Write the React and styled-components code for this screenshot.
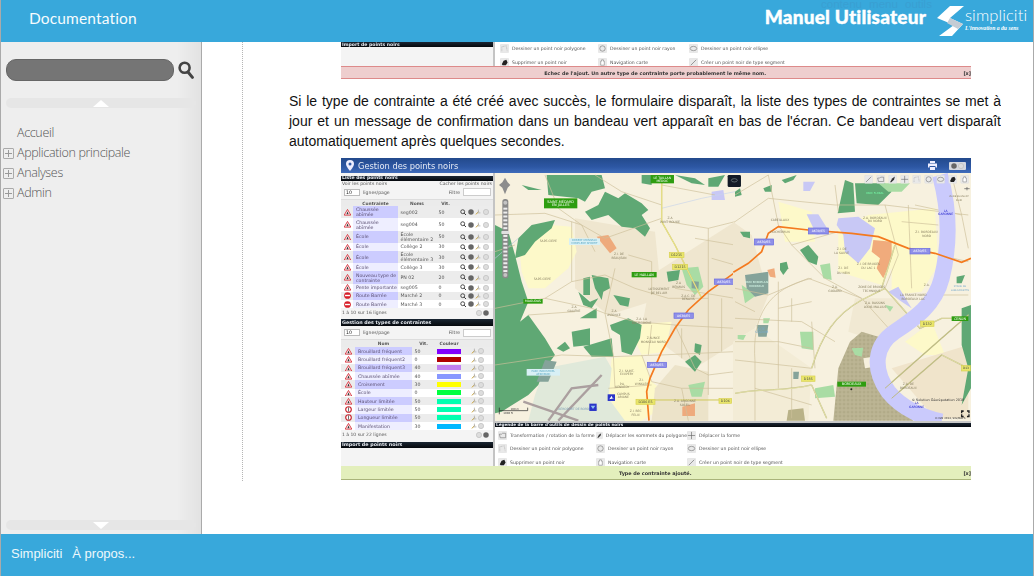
import React from "react";
import styled, { createGlobalStyle } from "styled-components";

const Global = createGlobalStyle`
  html, body { margin: 0; padding: 0; height: 100%; overflow: hidden; background: #fff; }
  #root { height: 100%; }
`;

const Page = styled.div`
  height: 576px; box-sizing: border-box; display: grid; grid-template-rows: 42px 1fr 42px;
  border-left: 1px solid #aaa; border-right: 1px solid #aaa; font-family: "Liberation Sans", Arial, sans-serif;
`;
const Header = styled.header`
  background: #38a8db; display: flex; align-items: center; justify-content: space-between; position: relative; overflow: hidden;
`;
const DocTitle = styled.div`
  margin-left: 28px; margin-top: -7px; color: #f6fcfe; font: 400 15.5px Lato, sans-serif; letter-spacing: 0.15px;
`;
const Ghost = styled.div`
  position: absolute; top: -1px; left: 820px; color: #3a9fd2; font: 400 11.5px/11px "Liberation Sans", sans-serif; word-spacing: 4px; white-space: nowrap;
`;
const Brand = styled.div` display: flex; align-items: center; margin-right: 7px; `;
const Manual = styled.div`
  color: #fff; font: 900 19px/20px Lato, sans-serif; letter-spacing: 0.2px; margin-right: 11px; margin-top: -8px; white-space: nowrap; -webkit-text-stroke: 0.4px #fff;
`;
const LogoText = styled.div` display: flex; flex-direction: column; margin-left: 0; width: 61px; margin-top: -3px; `;
const LogoName = styled.div` color: #fff; font: 300 16.5px/17px Lato, sans-serif; letter-spacing: 0.1px; `;
const LogoTag = styled.div` color: #fff; font: italic 700 5.7px/8px "Liberation Serif", serif; white-space: nowrap; `;

const Main = styled.main` display: grid; grid-template-columns: 201px 1fr; min-height: 0; overflow: hidden; `;
const Sidebar = styled.aside`
  border-right: 1px solid #aaa; display: flex; flex-direction: column; padding: 17px 5px 4px;
  background: linear-gradient(90deg, #eee 0, #eee 88%, #e2e2e2 100%);
`;
const SearchRow = styled.div` display: flex; align-items: center; gap: 4px; `;
const SearchField = styled.div`
  width: 168px; height: 22px; box-sizing: border-box; border-radius: 10px; background: #757575; border: 1px solid #666;
`;
const Band = styled.div`
  width: 190px; height: 10px; border-radius: 5px; background: #e6e6e6; margin-top: ${p => p.$top}; display: flex; justify-content: center;
`;
const Tri = styled.div`
  width: 0; height: 0; margin-top: 2px; border-left: 8px solid transparent; border-right: 8px solid transparent;
  ${p => p.$down ? "border-top: 7px solid #fff;" : "border-bottom: 7px solid #fff;"}
`;
const Menu = styled.nav` margin: 14px 0 0 -3px; display: flex; flex-direction: column; `;
const MenuItem = styled.div`
  height: 20px; display: flex; align-items: center; font: 300 12.5px "Open Sans", sans-serif; color: #555; white-space: nowrap; letter-spacing: -0.34px;
`;
const PlusBox = styled.span`
  width: 11px; height: 11px; box-sizing: border-box; border: 1px solid #aaa; border-radius: 1px; margin-right: 3px; margin-top: 2px; position: relative; flex: none;
  ${p => p.$empty ? "visibility: hidden;" : ""}
  &::before { content: ""; position: absolute; left: 1px; right: 1px; top: 4px; height: 1px; background: #999; }
  &::after { content: ""; position: absolute; top: 1px; bottom: 1px; left: 4px; width: 1px; background: #999; }
`;

const Content = styled.div` min-width: 0; overflow: hidden; `;
const Article = styled.article`
  margin-left: 40px; border-left: 1px dotted #b5b5b5; padding-left: 46px; width: 712px; height: 439px; overflow: hidden;
`;
const Para = styled.p`
  margin: 11px 0 7px; font: 14px/20px "Liberation Sans", Arial, sans-serif; color: #111; text-align: justify;
`;
const Shot = styled.div`
  margin-left: 52px; width: 630px; height: ${p => p.$h}px; overflow: hidden; filter: blur(0.3px);
  font-family: "DejaVu Sans", sans-serif; font-size: 4.7px; color: #555; background: #fff; display: flex; flex-direction: column;
`;
const ShotRow = styled.div` display: flex; height: ${p => p.$h}px; flex: none; `;
const LeftCol = styled.div`
  flex: none; background: #f4f4f4; border-right: 2px solid #c4c4c4; box-sizing: border-box; width: 154px;
  display: flex; flex-direction: column; padding-top: ${p => p.$top || 0}px;
`;
const Dark = styled.div`
  height: ${p => p.$h}px; flex: none; margin-top: ${p => p.$top || 0}px; background: linear-gradient(#1a2633, #05080c); color: #e4e8ee; font-size: ${p => p.$fs || 4.7}px;
  font-weight: 700; line-height: ${p => p.$h}px; padding-left: 1px; overflow: hidden; white-space: nowrap;
`;
const RightCol = styled.div` flex: 1; min-width: 0; display: flex; flex-direction: column; background: ${p => p.$bg || "#fff"}; `;
const Legend = styled.div`
  flex: 1; background: #fff; display: grid; grid-template-columns: 98px 91px 1fr; padding: ${p => p.$pad}; align-content: start; row-gap: ${p => p.$gap}px;
  font-size: 4.6px; color: #555;
`;
const LegendItem = styled.div` display: flex; align-items: center; gap: 3px; height: 10px; white-space: nowrap; `;
const Alert = styled.div`
  height: ${p => p.$h}px; flex: none; box-sizing: border-box; background: ${p => p.$bg}; border-top: 1px solid ${p => p.$line}; border-bottom: 1px solid ${p => p.$lineB || p.$line};
  display: grid; grid-template-columns: 1fr auto; align-items: center; font-size: 4.9px; font-weight: 700; color: #333;
`;
const AlertText = styled.span` text-align: center; padding-left: 6px; `;
const TitleBar = styled.div`
  height: 15px; flex: none; background: linear-gradient(#234a8c, #2d57a4 60%, #3f6cbb); display: flex; align-items: center; color: #e6ebf5;
  font-size: 8.3px; padding: 0 5px 0 5px; gap: 4px;
`;
const TitleSpacer = styled.div` flex: 1; `;
const SmallBtn = styled.div` width: 17px; height: 8px; background: #d5d8df; border-radius: 1px; margin-left: 7px; display: flex; align-items: center; justify-content: space-around; padding: 0 1px; box-sizing: border-box; `;
const Toggle = styled.div` height: 6.3px; flex: none; display: flex; justify-content: space-between; padding: 0 1px; line-height: 6.3px; font-size: 4.6px; white-space: nowrap; margin-top: 0.3px; `;
const LengthRow = styled.div` height: ${p => p.$h}px; margin-top: ${p => p.$top || 0}px; flex: none; display: flex; align-items: center; gap: 3px; padding: 0 2px 0 3px; font-size: 4.6px; `;
const SelectBox = styled.div` width: 16px; height: 7px; box-sizing: border-box; background: #fff; border: 1px solid #bbb; font-size: 4.7px; line-height: 5px; padding-left: 1px; color: #222; position: relative; `;
const FilterLabel = styled.span` margin-left: auto; `;
const FilterInput = styled.div` width: 28px; height: 8px; box-sizing: border-box; background: #fff; border: 1px solid #ccc; `;
const THead = styled.div`
  height: ${p => p.$h}px; margin-top: 2px; flex: none; display: grid; grid-template-columns: ${p => p.$cols}; background: #ebebeb; border-top: 1px solid #ddd; box-sizing: border-box;
  font-weight: 700; font-size: 4.4px; color: #555; align-items: center; text-align: center;
`;
const TRow = styled.div`
  height: ${p => p.$h}px; flex: none; display: grid; grid-template-columns: ${p => p.$cols}; background: ${p => p.$odd ? "#ececec" : "#fff"}; align-items: stretch;
`;
const Cell = styled.div` display: flex; align-items: center; line-height: 5px; overflow: hidden; padding-left: 2.5px; white-space: pre-line; `;
const NameCell = styled(Cell)` background: ${p => p.$odd ? "#ccccff" : "#eeeeff"}; color: #5a4f72; padding-left: 3px; `;
const IconCell = styled.div` display: flex; align-items: center; justify-content: center; `;
const ActionCell = styled.div` display: flex; align-items: center; justify-content: ${p => p.$end ? "flex-end" : "center"}; gap: 1.5px; padding-right: ${p => p.$end ? 9 : 0}px; `;
const Swatch = styled.div` display: flex; align-items: center; justify-content: center; &::before { content: ""; width: 24px; height: 5px; background: ${p => p.$c}; } `;
const TFoot = styled.div` height: 9px; flex: none; display: flex; align-items: center; justify-content: space-between; padding: 0 4px 0 1px; font-size: 4.5px; `;
const Pager = styled.div` display: flex; gap: 1px; `;
const MapBox = styled.div` height: ${p => p.$h}px; flex: none; background: #f6f0dd; `;
const MapSvg = styled.svg` display: block; `;

const Magnifier = () => (
  <svg width="16" height="18" viewBox="0 0 16 18"><circle cx="6.6" cy="6.8" r="5" fill="none" stroke="#444" strokeWidth="2.6" /><path d="M10 11l4.4 5.4" stroke="#444" strokeWidth="3" strokeLinecap="round" /></svg>
);
const Warn = ({ kind }) => {
  if (kind === "stop") return <svg width="7" height="7" viewBox="0 0 10 10"><circle cx="5" cy="5" r="4.8" fill="#d8202a" /><rect x="1.5" y="4" width="7" height="2" fill="#fff" /></svg>;
  if (kind === "round") return <svg width="7" height="7" viewBox="0 0 10 10"><circle cx="5" cy="5" r="4" fill="#fff" stroke="#c8202a" strokeWidth="1.6" /><path d="M5 2v6" stroke="#333" strokeWidth="1" /></svg>;
  return <svg width="7" height="6.5" viewBox="0 0 10 9"><path d="M5 .5L9.7 8.6H.3z" fill="#fff" stroke="#d8303a" strokeWidth="1.3" /><path d="M3.4 7.4L5 3l1.600 4.400z" fill="#333" /></svg>;
};
const Act = ({ t }) => {
  if (t === "m") return <svg width="6.500" height="6.500" viewBox="0 0 6 6"><circle cx="2.500" cy="2.500" r="1.800" fill="none" stroke="#333" strokeWidth=".8" /><path d="M3.800 3.800L5.600 5.600" stroke="#333" strokeWidth=".9" /></svg>;
  if (t === "d") return <svg width="6" height="6" viewBox="0 0 5 5"><circle cx="2.500" cy="2.500" r="2.300" fill="#666" /></svg>;
  if (t === "w") return <svg width="6" height="6" viewBox="0 0 6 6"><path d="M1 5.400L4 2" stroke="#c9a12f" strokeWidth="1" /><path d="M3.400 .6v3M2.400 3.900h3" stroke="#b5b5b5" strokeWidth=".9" /></svg>;
  return <svg width="6" height="6" viewBox="0 0 5 5"><circle cx="2.500" cy="2.500" r="2.200" fill="#ddd" stroke="#bbb" strokeWidth=".5" /></svg>;
};
const Tool = ({ t, s = 9 }) => {
  const glyph = {
    seg: <path d="M2 8L8 2" stroke="#777" strokeWidth=".8" />,
    trans: <path d="M1.500 3.500h2.500l1-1h3.500v5h-6z" fill="none" stroke="#777" strokeWidth=".7" />,
    vertex: <path d="M2 8.400L4.400 4 7.600 1.600 6.600 5.400 3.400 8.400z" fill="#333" />,
    move: <path d="M5 1v8M1 5h8" stroke="#666" strokeWidth=".7" />,
    poly: <path d="M2 8V3l5-1 1 6" fill="none" stroke="#aaa" strokeWidth=".7" strokeDasharray="1 .6" />,
    radius: <circle cx="5" cy="5" r="3" fill="none" stroke="#777" strokeWidth=".7" />,
    ellipse: <ellipse cx="5" cy="5" rx="3.600" ry="2.400" fill="none" stroke="#777" strokeWidth=".7" />,
    del: <path d="M2 7l2-4 3-1 1.500 3-2 3H3z" fill="#222" />,
    hand: <path d="M3 8V3.500h1V2h2v1.500h1V8z" fill="#fff" stroke="#777" strokeWidth=".6" />,
  }[t];
  return <svg width={s} height={s} viewBox="0 0 10 10"><rect x=".3" y=".3" width="9.400" height="9.400" rx="1" fill="#e9e9e9" stroke="#d8d8d8" strokeWidth=".4" />{glyph}</svg>;
};

const C1 = "12px 45px 38px 19px 1fr";
const C2 = "14px 57px 23px 28px 1fr";
const rows1 = [
  ["w", "Chaussée\nabîmée", "seg002", "50", 12.2], ["w", "Chaussée\nabîmée", "seg004", "50", 12.2],
  ["w", "École", "École\nélémentaire 2", "50", 12.2], ["w", "École", "Collège 2", "30", 8.2],
  ["w", "École", "École\nélémentaire 3", "30", 12.2], ["w", "École", "Collège 3", "30", 8.2],
  ["w", "Nouveau type de\ncontrainte", "PN 02", "20", 12.2], ["w", "Pente importante", "seg005", "0", 8.2],
  ["stop", "Route Barrée", "Marché 2", "0", 8.2], ["stop", "Route Barrée", "Marché 3", "0", 8.2],
];
const rows2 = [
  ["w", "Brouillard fréquent", "50", "#8000ff"], ["w", "Brouillard fréquent2", "0", "#b00000"], ["w", "Brouillard fréquent3", "40", "#c080f0"],
  ["w", "Chaussée abîmée", "40", "#8898ff"], ["w", "Croisement", "30", "#ffff00"], ["w", "École", "0", "#00ff40"],
  ["w", "Hauteur limitée", "50", "#00ffb0"], ["round", "Largeur limitée", "50", "#00ffb0"], ["round", "Longueur limitée", "50", "#00ffb0"], ["w", "Manifestation", "30", "#00b8ff"],
];
const legend = [
  ["trans", "Transformation / rotation de la forme"], ["vertex", "Déplacer les sommets du polygone"], ["move", "Déplacer la forme"],
  ["poly", "Dessiner un point noir polygone"], ["radius", "Dessiner un point noir rayon"], ["ellipse", "Dessiner un point noir ellipse"],
  ["del", "Supprimer un point noir"], ["hand", "Navigation carte"], ["seg", "Créer un point noir de type segment"],
];

const P = ({ c, d }) => <path d={d} fill={c} />;
const poly = (pts) => "M" + pts.join(" L") + "z";
const Sign = ({ x, y, w, h, bg, fg = "#fff", t, b, fs = 12, stroke }) => (
  <g>
    <rect x={x} y={y} width={w} height={h} fill={bg} stroke={stroke || "none"} strokeWidth="2" />
    <text x={x + w / 2} y={b ? y + h / 2 - 1 : y + h / 2 + fs * 0.35} fontSize={fs} fill={fg} textAnchor="middle" fontFamily="DejaVu Sans">{t}</text>
    {b && <text x={x + w / 2} y={y + h / 2 + fs * 0.9} fontSize={fs} fill={fg} textAnchor="middle" fontFamily="DejaVu Sans">{b}</text>}
  </g>
);
const Label = ({ x, y, t, c = "#8a8264", fs = 11 }) => <text x={x} y={y} fontSize={fs} fill={c} textAnchor="middle" fontFamily="DejaVu Sans">{t}</text>;

const FOREST = "#5fa874";
const BEIGE = "#efe6cf";
const YEL = "#fdf9c9";
const LGREEN = "#a9dca4";
const ROAD = "#cdbf9a";

const MapView = () => (
  <MapSvg width="476" height="248" viewBox="495 173 476 248">
    <defs>
      <pattern id="city" width="4" height="4" patternUnits="userSpaceOnUse">
        <rect width="4" height="4" fill="#bdb695" />
        <rect width="2" height="2" fill="#a9a380" />
      </pattern>
    </defs>
    <rect x="495" y="173" width="476" height="248" fill="#f7f1df" />
    <g transform="translate(495 155) scale(.3333)">
      <P c={BEIGE} d={poly(["240,190", "480,230", "500,430", "340,480", "240,400"])} />
      <P c={BEIGE} d={poly(["470,360", "720,200", "725,560", "600,640", "440,520"])} />
      <P c={YEL} d={poly(["75,300", "110,240", "170,210", "230,215", "245,290", "220,340", "150,400", "100,400", "80,350"])} />
      <P c={YEL} d={poly(["400,510", "530,500", "510,590", "440,600"])} />
      <P c={YEL} d={poly(["350,610", "440,600", "470,680", "540,735", "440,797", "380,797", "340,720"])} />
      <P c="#e0e9da" d={poly(["150,640", "330,605", "350,640", "340,730", "390,797", "100,797", "120,720"])} />
      <P c="#ece3c9" d={poly(["540,630", "640,650", "640,797", "470,797", "480,700"])} />
      <P c={FOREST} d={poly(["0,210", "40,230", "60,300", "80,380", "100,440", "75,500", "100,480", "150,550", "180,600", "150,640", "130,690", "100,720", "20,770", "0,775"])} />
      <P c={FOREST} d={poly(["155,60", "320,60", "330,100", "290,110", "270,140", "250,130", "160,120"])} />
      <P c={FOREST} d={poly(["270,170", "310,150", "330,110", "370,130", "390,115", "440,145", "460,165", "440,180", "465,220", "450,245", "420,220", "380,215", "340,180", "290,195"])} />
      <P c={FOREST} d={poly(["60,310", "70,250", "110,210", "180,195", "170,220", "120,260", "90,300"])} />
      <P c={FOREST} d={poly(["265,370", "285,365", "285,420", "265,420"])} />
      <P c={FOREST} d={poly(["290,360", "340,370", "345,400", "325,410", "320,435", "300,400"])} />
      <P c={FOREST} d={poly(["250,410", "285,440", "310,430", "290,460", "265,450"])} />
      <P c={FOREST} d={poly(["355,420", "405,430", "400,455", "375,450"])} />
      <P c={FOREST} d={poly(["255,490", "305,460", "305,490"])} />
      <P c={FOREST} d={poly(["345,510", "400,490", "440,510", "435,550", "410,600", "380,590", "375,540", "350,525"])} />
      <P c={FOREST} d={poly(["230,530", "285,520", "285,570", "235,575"])} />
      <P c={FOREST} d={poly(["185,580", "210,560", "225,580", "205,590"])} />
      <P c={FOREST} d={poly(["265,575", "350,550", "355,605", "290,605"])} />
      <P c={FOREST} d={poly(["515,350", "555,345", "550,375", "520,380"])} />
      <P c={FOREST} d={poly(["570,620", "600,600", "620,620", "600,650"])} />
      <P c={FOREST} d={poly(["600,565", "620,570", "615,600", "598,590"])} />
      <P c={FOREST} d={poly(["440,60", "470,60", "470,90", "440,85"])} />
      <P c={FOREST} d={poly(["540,60", "600,70", "630,90", "590,85"])} />
      <P c={FOREST} d={poly(["640,70", "690,60", "670,95", "640,95"])} />
      <P c={FOREST} d={poly(["80,90", "140,105", "100,105"])} />
      <P c={LGREEN} d={poly(["560,340", "610,335", "625,395", "600,420", "575,390"])} />
      <P c={LGREEN} d={poly(["580,690", "630,680", "620,725", "590,725"])} />
      <P c="#85a39a" d={poly(["590,378", "612,380", "610,402", "590,400"])} />
      <P c="#85a39a" d={poly(["150,615", "185,620", "160,680", "125,680"])} />
      <P c="#c8c8f5" d={poly(["650,110", "685,105", "690,135", "650,135"])} />
      <P c="#eeaa7c" d={poly(["305,245", "340,240", "365,280", "345,295"])} />
      <P c="#eeaa7c" d={poly(["562,755", "600,745", "600,783", "562,783"])} />
      {["M0 180 L150 175 L260 210 L330 250 L500 190", "M150 60 L190 160 L260 210 L300 290", "M0 460 L150 430 L230 380 L330 360 L420 400 L520 430 L640 430", "M330 475 L420 500 L540 510 L720 520", "M150 430 L290 460 L330 475 L355 600 L360 700", "M0 630 L200 600 L350 605 L500 600 L720 590", "M640 220 L640 720", "M0 290 L60 270", "M540 510 L600 640 L640 660", "M360 340 L330 475", "M600 250 L720 270", "M520 200 L640 220 L720 200", "M500 90 L660 120", "M440 600 L470 680 L560 700 L720 700", "M340 700 L470 690", "M540 400 L720 430", "M400 300 L470 320 L470 420", "M230 380 L230 200", "M470 510 L460 600", "M650 310 L720 330", "M560 520 L560 610", "M680 430 L680 590", "M640 660 L720 650", "M560 700 L580 797", "M100 480 L240 470", "M300 60 L380 110 L500 150"].map((d, i) => <path key={i} d={d} fill="none" stroke={ROAD} strokeWidth="2" />)}
      <path d="M0 310L70 250" stroke="#b9c6dc" strokeWidth="2" fill="none" />
      <path d="M500 160L620 130 720 110" stroke="#c9d4ea" strokeWidth="2" fill="none" />
      <path d="M500 60V200L540 270 590 370 620 430" fill="none" stroke="#cfc85a" strokeWidth="4" />
      <path d="M500 60V200L540 270 590 370 620 430" fill="none" stroke="#f4efa8" strokeWidth="2" />
      <path d="M440 735H672" fill="none" stroke="#cfc85a" strokeWidth="3" />
      <g stroke="#ab9f9f" strokeWidth="7" fill="none">
        <path d="M85 740L250 797" /><path d="M320 660L190 797" /><path d="M160 797L230 700L310 690" />
      </g>
      <path d="M720 352L640 410 580 465 540 520 500 590 465 670 455 710 462 797" fill="none" stroke="#f47a1f" strokeWidth="5" />
      <Sign x={147} y={130} w={100} h={30} bg="#2e9d10" t="SAINT-MÉDARD" b="EN JALLES" fs={10.5} />
      <Sign x={467} y={60} w={70} h={25} bg="#2e9d10" t="LE TAILLAN" b="MÉDOC" fs={9.5} />
      <Sign x={410} y={351} w={75} h={16} bg="#2e9d10" t="LE HAILLAN" fs={10} />
      <Sign x={85} y={432} w={58} h={14} bg="#2e9d10" t="MAGUDAS" fs={9.5} />
      <Sign x={523} y={293} w={44} h={15} bg="#e9e66a" fg="#444" t="D1215" stroke="#d8d050" fs={10} />
      <Sign x={533} y={328} w={45} h={15} bg="#e9e66a" fg="#444" t="D1215" stroke="#d8d050" fs={10} />
      <Sign x={423} y={733} w={57} h={15} bg="#e9e66a" fg="#444" t="D106 E5" stroke="#d8d050" fs={10} />
      <Sign x={672} y={731} w={38} h={14} bg="#e9e66a" fg="#444" t="D106" stroke="#d8d050" fs={10} />
      <Sign x={658} y={372} w={58} h={16} bg="#8f90e8" t="A630/E5" stroke="#6a6ce0" fs={9.5} />
      <Sign x={537} y={474} w={58} h={16} bg="#8f90e8" t="A630/E5" stroke="#6a6ce0" fs={9.5} />
      <Sign x={457} y={622} w={58} h={16} bg="#8f90e8" t="A630/E5" stroke="#6a6ce0" fs={9.5} />
      <Sign x={222} y={250} w={93} h={20} bg="#d8f0f5" fg="#5aa7c4" t="ROBERT MONSEAU" b="COMPLEXE SPORTIF" fs={8} />
      <Sign x={95} y={642} w={100} h={20} bg="#d8f0f5" fg="#5aa7c4" t="PARC INDUSTRIEL" b="AÉROPARC" fs={8} />
      <Label x={160} y={262} t="5APE-CIEPE" fs={9} /><Label x={142} y={376} t="5APE-CIEPE" fs={9} />
      <Label x={372} y={300} t="Z.I. DE" fs={9} /><Label x={372} y={312} t="BEAUJEAN" fs={9} />
      <Label x={525} y={192} t="Z.A" fs={9} /><Label x={525} y={203} t="PONT ROUGE" fs={9} />
      <Label x={237} y={460} t="Z.A" fs={9} /><Label x={237} y={472} t="GALIÈNE" fs={9} />
      <Label x={357} y={472} t="Z.A" fs={9} /><Label x={357} y={484} t="AVIONCE" fs={9} />
      <Label x={440} y={495} t="Z.A. LA" fs={9} /><Label x={440} y={506} t="BOURGOGNE" fs={9} />
      <Label x={492} y={404} t="LOTISSEMENT" fs={9} /><Label x={492} y={416} t="DE BEL AIR" fs={9} />
      <Label x={475} y={552} t="Z.SUNCE" fs={9} /><Label x={475} y={564} t="MONSEAU NORD" fs={9} />
      <Label x={395} y={650} t="Z.I. SAINT-" fs={9} /><Label x={395} y={661} t="EXUPÉRY" fs={9} />
      <Label x={440} y={679} t="Z.I." fs={9} /><Label x={440} y={690} t="WINKLER" fs={9} />
      <Label x={382} y={689} t="P.A." fs={9} /><Label x={382} y={700} t="KENNEDY" fs={9} />
      <Label x={385} y={719} t="CAMPUS" fs={9} /><Label x={385} y={730} t="ARIANE" fs={9} />
      <Label x={422} y={772} t="Z.I. BEC" fs={9} /><Label x={422} y={783} t="FELIX" fs={9} />
      <Label x={580} y={425} t="Z.A.C. DE" fs={9} /><Label x={580} y={436} t="BÉNAVIS" fs={9} />
      <Label x={570} y={742} t="Z.A. ARGONNE" fs={9} /><Label x={570} y={753} t="SOLEIL" fs={9} />
      <Label x={551} y={388} t="Z.A" fs={9} /><Label x={551} y={400} t="BÉNAVIS" fs={9} />
      <text x={190} y={764} fontSize="9" fill="#7d9db4" fontFamily="DejaVu Sans">AÉROPORT DE BORDEAUX</text>
      <rect x="338" y="718" width="22" height="20" fill="#2a35c8" /><path d="M343 733l7-11 2 6 5 2-7 1z" fill="#fff" />
      <rect x="283" y="746" width="22" height="22" fill="#2a35c8" /><path d="M287 752h14l-7 10z" fill="#8ec0f0" />
      <path d="M13 758V778M13 767H98V758" fill="none" stroke="#222" strokeWidth="2" />
      <text x="47" y="764" fontSize="8" fill="#333" fontFamily="DejaVu Sans">200 m</text>
      <text x="25" y="778" fontSize="8" fill="#333" fontFamily="DejaVu Sans">1000 ft</text>
      <path d="M30 68l8 14 8 8 -8 8 -8 20 -8 -20 -10 -8 10 -8z" fill="#8d8d8d" />
      <rect x="22" y="132" width="18" height="238" rx="8" fill="#8a8a8a" />
      {Array.from({ length: 17 }, (_, i) => <rect key={i} x="25" y={158 + i * 11.7} width="12" height="6" fill="#eee" />)}
      <rect x="19" y="228" width="24" height="9" rx="2" fill="#e0e0e0" />
      <circle cx="31" cy="143" r="6" fill="#c4c4c4" /><circle cx="31" cy="360" r="6" fill="#c4c4c4" />
      <rect x="698" y="60" width="40" height="36" rx="4" fill="#121a26" />
      <ellipse cx="718" cy="76" rx="9" ry="5" fill="none" stroke="#9aa" strokeWidth="1.5" />
    </g>
    <g transform="translate(735 155) scale(.3333)">
      <P c={BEIGE} d={poly(["-6,200", "50,240", "100,420", "60,520", "-6,560"])} />
      <P c="#f3ecd6" d={poly(["-6,560", "60,520", "230,640", "220,797", "-6,797"])} />
      <P c={YEL} d={poly(["130,140", "230,170", "240,260", "150,260"])} />
      <P c={YEL} d={poly(["310,220", "400,180", "600,160", "610,330", "560,410", "470,420", "470,340", "440,390", "310,350"])} />
      <P c={YEL} d={poly(["510,560", "590,500", "630,600", "570,600"])} />
      <P c="#f1e9d3" d={poly(["360,430", "480,430", "540,500", "430,560", "340,530"])} />
      <P c="#f0e4cb" d={poly(["470,640", "700,570", "700,790", "600,790"])} />
      <P c={FOREST} d={poly(["308,175", "330,75", "355,85", "360,170"])} />
      <P c={FOREST} d={poly(["360,85", "450,85", "470,110", "430,150", "365,145"])} />
      <P c={LGREEN} d={poly(["430,85", "525,85", "500,110", "460,110"])} />
      <P c={FOREST} d={poly(["195,285", "220,270", "250,305", "245,330", "220,320"])} />
      <P c={FOREST} d={poly(["135,325", "155,320", "160,340", "145,360", "135,345"])} />
      <P c={FOREST} d={poly(["85,100", "110,90", "110,110", "90,110"])} />
      <P c={FOREST} d={poly(["0,110", "15,100", "20,120", "0,125"])} />
      <P c={FOREST} d={poly(["15,230", "45,230", "45,250", "25,245"])} />
      <P c={FOREST} d={poly(["140,75", "185,60", "175,75", "150,85"])} />
      <P c={FOREST} d={poly(["680,460", "708,450", "708,700", "680,750", "700,640", "680,570"])} />
      <P c={FOREST} d={poly(["665,365", "690,360", "680,385", "665,385"])} />
      <P c={LGREEN} d={poly(["240,700", "295,690", "300,725", "240,730"])} />
      <P c={LGREEN} d={poly(["255,330", "285,325", "290,375", "265,370"])} />
      <P c={LGREEN} d={poly(["195,530", "235,530", "235,585", "200,580"])} />
      <P c={LGREEN} d={poly(["20,390", "65,420", "30,445"])} />
      <P c={LGREEN} d={poly(["8,540", "33,540", "25,555", "8,552"])} />
      <P c={LGREEN} d={poly(["85,490", "105,490", "100,505", "85,505"])} />
      <P c="#85a39a" d={poly(["30,360", "100,350", "100,415", "60,425", "35,400"])} />
      <P c="#85a39a" d={poly(["65,510", "100,510", "95,545", "70,545"])} />
      <P c="#85a39a" d={poly(["175,650", "192,650", "190,672", "175,672"])} />
      <P c="#b9b288" d={poly(["160,765", "205,760", "210,797", "155,797"])} />
      <P c="#c8c8f5" d={poly(["215,178", "250,178", "283,230", "245,240"])} />
      <P c="#c8c8f5" d={poly(["310,190", "370,185", "420,220", "405,280", "370,325", "330,290", "325,240", "305,210"])} />
      <P c="#c8c8f5" d={poly(["205,80", "240,80", "225,108", "205,108"])} />
      <P c="#c8c8f5" d={poly(["460,410", "490,395", "530,460", "500,440"])} />
      <P c="#f0ab7c" d={poly(["415,255", "470,260", "470,310", "445,370", "425,340", "435,310", "410,290"])} />
      <P c="#f0ab7c" d={poly(["97,345", "118,340", "122,368", "105,365"])} />
      <P c={LGREEN} d={poly(["450,450", "475,455", "465,470"])} />
      <P c="url(#city)" d={poly(["345,560", "380,530", "430,545", "430,600", "420,660", "470,730", "535,797", "295,797", "310,640"])} />
      <P c={LGREEN} d={poly(["350,580", "385,578", "380,605", "360,600"])} />
      <P c="#f6f0dd" d={poly(["385,610", "415,605", "420,635", "390,640"])} />
      {["M100 60 L130 210 L170 270 L270 370 L380 430", "M0 400 L100 420 L220 370 L380 430", "M60 620 C50 480 100 400 230 370", "M0 490 L200 500 L300 560", "M380 430 L470 530", "M0 200 L100 130 L300 150 L450 150 L700 180", "M60 620 L60 797", "M0 615 L230 640", "M130 380 L130 700", "M230 500 L240 640", "M450 150 L490 300 L450 400", "M520 150 L530 400", "M540 150 L680 180", "M650 60 L680 180 L700 280", "M610 420 L700 420", "M0 120 L100 60", "M0 560 L130 560 L230 580", "M130 460 L230 440", "M60 700 L230 750", "M170 270 L310 230", "M170 640 L170 790", "M500 200 L610 210", "M610 300 L700 320", "M300 90 L310 170", "M0 440 L60 470", "M170 430 L170 500"].map((d, i) => <path key={i} d={d} fill="none" stroke={ROAD} strokeWidth="2" />)}
      {["M230 640 C260 540 300 480 380 435 L450 400", "M0 715 C80 700 150 710 230 690", "M230 690 L275 790", "M450 400 L555 520 L620 490 L680 490", "M450 700 L620 550 L700 480", "M440 400 L480 270", "M470 730 L620 600 L700 640"].map((d, i) => (
        <g key={i}><path d={d} fill="none" stroke="#bcb983" strokeWidth="4" /><path d={d} fill="none" stroke="#f2eeb4" strokeWidth="2" /></g>
      ))}
      <path d="M615 60C640 150 650 250 620 370 600 450 540 490 480 530 420 570 410 640 460 710 500 760 570 790 620 800" fill="none" stroke="#cacafc" strokeWidth="48" />
      <path d="M450 700L620 550 700 480M470 730L620 600" fill="none" stroke="#bcb983" strokeWidth="3" />
      <path d="M-5 352L40 325 80 290 100 235 130 215 220 225 350 235 430 245 520 280 600 295 680 322 708 310" fill="none" stroke="#f47a1f" strokeWidth="5" />
      <Sign x={220} y={219} w={60} h={18} bg="#8f90e8" t="A630/E5" stroke="#6a6ce0" fs={9.5} />
      <Sign x={58} y={252} w={58} h={18} bg="#8f90e8" t="A630/E5" stroke="#6a6ce0" fs={9.5} />
      <Sign x={525} y={280} w={60} h={17} bg="#8f90e8" t="A630/E5" stroke="#6a6ce0" fs={9.5} />
      <Sign x={557} y={498} w={40} h={16} bg="#e9e66a" fg="#444" t="D132" stroke="#d8d050" fs={10} />
      <Sign x={200} y={663} w={40} h={16} bg="#e9e66a" fg="#444" t="D185" stroke="#d8d050" fs={10} />
      <Sign x={680} y={632} w={26} h={16} bg="#e9e66a" fg="#444" t="D13" stroke="#d8d050" fs={9} />
      <Sign x={650} y={484} w={50} h={14} bg="#2e9d10" t="CENON" fs={10} />
      <Sign x={307} y={680} w={86} h={15} bg="#2e9d10" t="BORDEAUX" fs={10.5} />
      <circle cx="349" cy="703" r="3" fill="#222" />
      <Label x={632} y={170} t="LA" c="#2222cc" fs={9} /><Label x={632} y={181} t="GARONNE" c="#2222cc" fs={9} />
      <Label x={545} y={748} t="LA" c="#2222cc" fs={9} /><Label x={545} y={760} t="GARONNE" c="#2222cc" fs={9} />
      <Label x={420} y={118} t="PARC FLORAL" c="#7fa" fs={8} />
      <Label x={135} y={198} t="CABEILLAUX" fs={9} /><Label x={135} y={235} t="HOCHEBRUN" fs={9} />
      <Label x={420} y={192} t="Z.A. BORDEAUX" fs={9} /><Label x={420} y={202} t="DU NORD" fs={9} />
      <Label x={320} y={285} t="Z.I. DE" fs={9} /><Label x={320} y={296} t="LA SAUVE" fs={9} />
      <Label x={325} y={343} t="Z.I. DE" fs={9} /><Label x={325} y={356} t="DU NEIN" fs={9} />
      <Label x={400} y={331} t="Z.I. DE BRUGES" fs={9} /><Label x={400} y={343} t="DU LAC 1" fs={9} />
      <Label x={410} y={400} t="ZONE DE BRUGES" fs={9} /><Label x={410} y={411} t="TECHNIQUE" fs={9} />
      <Label x={300} y={398} t="Z.A." fs={9} /><Label x={300} y={410} t="GODARD" fs={9} />
      <Label x={420} y={448} t="Z.A. BASSINS" fs={9} /><Label x={420} y={459} t="LOUIS MALLIUS" fs={9} />
      <Label x={535} y={424} t="LA FRANCE NORD" fs={9} /><Label x={535} y={436} t="BORDEAUX LAC" fs={9} />
      <Label x={575} y={235} t="Z.I. BORDEAUX" fs={9} /><Label x={575} y={247} t="NORD" fs={9} />
      <Label x={575} y={394} t="Z.A." fs={9} />
      <Label x={672} y={125} t="ZONE BOUSCAT" fs={7.5} /><Label x={672} y={137} t="NOIR" fs={7.5} />
      <Label x={675} y={395} t="STADE DE" c="#7ac" fs={7.5} /><Label x={675} y={407} t="LABOURDETTE" c="#7ac" fs={7.5} />
      <Label x={65} y={385} t="PARC BORDELAIS" c="#dfe" fs={8} /><Label x={65} y={396} t="BORDEAUX" c="#dfe" fs={8} />
      <Label x={80} y={524} t="CITÉ" c="#7ac" fs={9} /><Label x={80} y={535} t="STADIUM" c="#7ac" fs={9} />
      <Label x={520} y={690} t="Z.A. DE" fs={9} /><Label x={520} y={703} t="BORDEAUX" fs={9} />
      <text x="530" y="738" fontSize="10" fill="#333" fontFamily="DejaVu Sans">© Solution Géoréputation 2018</text>
      <text x="600" y="793" fontSize="8" fill="#333" fontFamily="DejaVu Sans">© IGN 2014, SIG/MAPS</text>
      <path d="M678 766h8v5h-4v4h-4zM696 766h8v9h-4v-5h-4zM678 778h4v4h4v5h-8zM704 787h-8v-5h4v-4h4z" fill="#222" />
      {["seg", "trans", "vertex", "move", "poly", "radius", "ellipse", "del", "hand"].map((t, i) => (
        <g key={t} transform={`translate(${388 + i * 36} 60) scale(2.6)`}><Tool t={t} s={10} /></g>
      ))}
      <path d="M688 101h16M696 96v10" stroke="#555" strokeWidth="2" />
    </g>
  </MapSvg>
);

const Import = ({ top, h, fs }) => <Dark $h={h} $top={top} $fs={fs}>Import de points noirs</Dark>;

const LegendItems = ({ items }) => items.map(([t, label]) => (
  <LegendItem key={t}><Tool t={t} /><span>{label}</span></LegendItem>
));

const FooterBar = styled.footer`
  background: #38a8db; display: flex; align-items: center; gap: 10px; padding: 0 0 4px 10px; color: #eef8fc; font: 13px "Liberation Sans", Arial, sans-serif;
`;
function Footer() {
  return <FooterBar><span>Simpliciti</span><span>À propos...</span></FooterBar>;
}

export default function App() {
  return (
    <>
      <Global />
      <Page>
        <Header>
          <DocTitle>Documentation</DocTitle>
          <Ghost>contenu menu outils</Ghost>
          <Brand>
            <Manual>Manuel Utilisateur</Manual>
            <svg width="28" height="34" viewBox="0 0 28 34">
              <path d="M13 2h14L13 14l13 6-11 12H2l15-11L0 14z" fill="#fff" />
              <path d="M13 14l13 6-5 5-11-6z" fill="#c4ccd4" />
            </svg>
            <LogoText>
              <LogoName>simpliciti</LogoName>
              <LogoTag>L'innovation a du sens</LogoTag>
            </LogoText>
          </Brand>
        </Header>
        <Main>
          <Sidebar>
            <SearchRow>
              <SearchField />
              <Magnifier />
            </SearchRow>
            <Band $top="17px"><Tri /></Band>
            <Menu>
              <MenuItem><PlusBox $empty />Accueil</MenuItem>
              <MenuItem><PlusBox />Application principale</MenuItem>
              <MenuItem><PlusBox />Analyses</MenuItem>
              <MenuItem><PlusBox />Admin</MenuItem>
            </Menu>
            <Band $top="auto"><Tri $down /></Band>
          </Sidebar>
          <Content>
            <Article>
              <Shot $h={38}>
                <ShotRow $h={24}>
                  <LeftCol><Import h={5} fs={4.6} /></LeftCol>
                  <RightCol>
                    <Legend $pad="1px 0 0 5px" $gap={4}>
                      <LegendItems items={legend.slice(3)} />
                    </Legend>
                  </RightCol>
                </ShotRow>
                <Alert $h={13} $bg="#eecece" $line="#dd8a8a">
                  <AlertText>Echec de l'ajout. Un autre type de contrainte porte probablement le même nom.</AlertText>
                  <span>[x]</span>
                </Alert>
              </Shot>
              <Para>Si le type de contrainte a été créé avec succès, le formulaire disparaît, la liste des types de contraintes se met à jour et un message de confirmation dans un bandeau vert apparaît en bas de l'écran. Ce bandeau vert disparaît automatiquement après quelques secondes.</Para>
              <Shot $h={322}>
                <TitleBar>
                  <svg width="8" height="11" viewBox="0 0 8 11"><path d="M4 0a4 4 0 0 1 4 4c0 2.500-4 7-4 7S0 6.500 0 4a4 4 0 0 1 4-4z" fill="#eef" /><circle cx="4" cy="4" r="1.500" fill="#2f5aa8" /></svg>
                  <span>Gestion des points noirs</span>
                  <TitleSpacer />
                  <svg width="11" height="11" viewBox="0 0 11 11"><path d="M3 1h5v2H3zM1 3.500h9v4H8.500V6h-6v1.500H1zM3 7h5v3H3z" fill="#eef" /></svg>
                  <SmallBtn><Act t="d" /><Act t="c" /></SmallBtn>
                </TitleBar>
                <ShotRow $h={293}>
                  <LeftCol $top={3}>
                    <Dark $h={4.7} $fs={4.6}>Liste des points noirs</Dark>
                    <Toggle><span>Voir les points noirs</span><span>Cacher les points noirs</span></Toggle>
                    <LengthRow $h={10}><SelectBox>10</SelectBox><span>lignes/page</span><FilterLabel>Filtre</FilterLabel><FilterInput /></LengthRow>
                    <THead $h={7} $cols={C1}><span /><span>Contrainte</span><span>Noms</span><span>Vit.</span><span /></THead>
                    {rows1.map((r, i) => (
                      <TRow key={i} $h={r[4]} $odd={i % 2 === 0} $cols={C1}>
                        <IconCell><Warn kind={r[0]} /></IconCell>
                        <NameCell $odd={i % 2 === 0}>{r[1]}</NameCell>
                        <Cell>{r[2]}</Cell>
                        <Cell>{r[3]}</Cell>
                        <ActionCell><Act t="m" /><Act t="d" /><Act t="w" /><Act t="c" /></ActionCell>
                      </TRow>
                    ))}
                    <TFoot><span>1 à 10 sur 16 lignes</span><Pager><Act t="c" /><Act t="d" /></Pager></TFoot>
                    <Dark $h={7} $top={2} $fs={4.8}>Gestion des types de contraintes</Dark>
                    <LengthRow $h={9} $top={2}><SelectBox>10</SelectBox><span>lignes/page</span><FilterLabel>Filtre</FilterLabel><FilterInput /></LengthRow>
                    <THead $h={8} $cols={C2}><span /><span>Nom</span><span>Vit.</span><span>Couleur</span><span /></THead>
                    {rows2.map((r, i) => (
                      <TRow key={i} $h={8.33} $odd={i % 2 === 0} $cols={C2}>
                        <IconCell><Warn kind={r[0]} /></IconCell>
                        <NameCell $odd={i % 2 === 0}>{r[1]}</NameCell>
                        <Cell>{r[2]}</Cell>
                        <Swatch $c={r[3]} />
                        <ActionCell $end><Act t="w" /><Act t="c" /></ActionCell>
                      </TRow>
                    ))}
                    <TFoot><span>1 à 10 sur 22 lignes</span><Pager><Act t="c" /><Act t="d" /></Pager></TFoot>
                    <Import h={6} top={3} fs={4.8} />
                  </LeftCol>
                  <RightCol $bg="#c8c8c8">
                    <MapBox $h={248}><MapView /></MapBox>
                    <Dark $h={4} $top={2} $fs={4.2}>Légende de la barre d'outils de dessin de points noirs</Dark>
                    <Legend $pad="3px 0 0 3px" $gap={3.5}>
                      <LegendItems items={legend} />
                    </Legend>
                  </RightCol>
                </ShotRow>
                <Alert $h={14} $bg="#e3efbc" $line="#e3efbc" $lineB="#a9b47a">
                  <AlertText>Type de contrainte ajouté.</AlertText>
                  <span>[x]</span>
                </Alert>
              </Shot>
            </Article>
          </Content>
        </Main>
        <Footer />
      </Page>
    </>
  );
}
